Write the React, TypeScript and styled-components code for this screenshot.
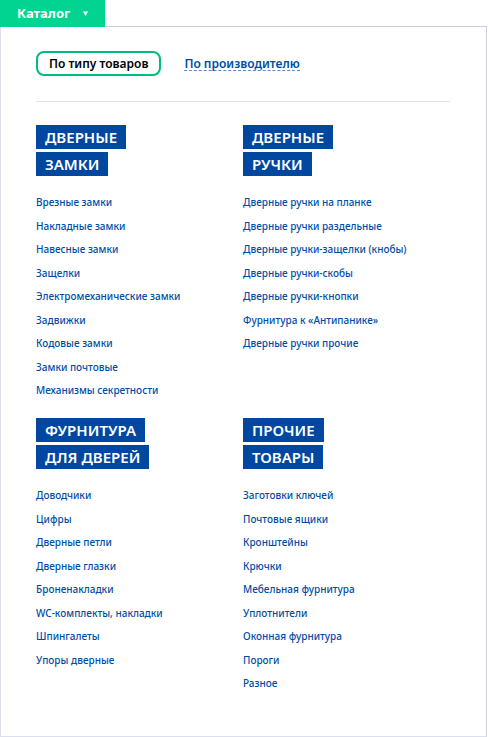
import React from "react";
import styled, { createGlobalStyle } from "styled-components";

const GlobalStyle = createGlobalStyle`
  * { box-sizing: border-box; }
  body {
    margin: 0;
    background: #fff;
    font-family: "Noto Sans", "Open Sans", sans-serif;
  }
`;

const Page = styled.div`
  display: flex;
  flex-direction: column;
  align-items: flex-start;
  padding-right: 1px;
`;

const CatalogButton = styled.button`
  display: flex;
  align-items: center;
  gap: 13px;
  height: 27px;
  margin-bottom: -1px;
  padding: 0 17px;
  border: 0;
  z-index: 1;
  background: #00d490;
  color: #fff;
  font: 700 13px/27px "Noto Sans", sans-serif;
  cursor: pointer;
`;

const Panel = styled.main`
  align-self: stretch;
  padding: 24px 36px 40px 35px;
  border: 1px solid #dcdfed;
  border-top-color: #c9cedd;
  border-right-color: #cdd1e2;
`;

const Tabs = styled.nav`
  display: flex;
  align-items: center;
  gap: 23px;
  padding-bottom: 25px;
  border-bottom: 1px solid #dfe5e7;
`;

const ActiveTab = styled.button`
  height: 25px;
  padding: 0 11px;
  border: 2px solid #00bd7b;
  border-radius: 8px;
  background: #fff;
  color: #000;
  font: 600 12px/21px "Noto Sans", sans-serif;
  cursor: pointer;
`;

const TabLink = styled.a`
  border-bottom: 1px dashed #5d8bc5;
  color: #004da5;
  font-size: 12px;
  font-weight: 600;
  line-height: 13px;
  text-decoration: none;
`;

const Groups = styled.div`
  display: grid;
  grid-template-columns: 1fr 1fr;
  row-gap: 15px;
  padding-top: 23px;
`;

const Heading = styled.h2`
  display: flex;
  flex-direction: column;
  align-items: flex-start;
  gap: 3px;
  margin: 0 0 15px;
`;

const HeadingLine = styled.span`
  padding: 0 9px;
  background: #0047a0;
  color: #fff;
  font-size: 15px;
  font-weight: 600;
  line-height: 24px;
`;

const List = styled.ul`
  display: grid;
  grid-auto-rows: 24px 23px;
  margin: 0;
  padding: 0;
  list-style: none;
`;

const Item = styled.li`
  font-size: 10px;
  line-height: 23px;
`;

const ItemLink = styled.a`
  color: #004da5;
  font-weight: 500;
  text-decoration: none;
  white-space: nowrap;
`;

const groups = [
  {
    title: ["ДВЕРНЫЕ", "ЗАМКИ"],
    items: ["Врезные замки", "Накладные замки", "Навесные замки", "Защелки", "Электромеханические замки", "Задвижки", "Кодовые замки", "Замки почтовые", "Механизмы секретности"],
  },
  {
    title: ["ДВЕРНЫЕ", "РУЧКИ"],
    items: ["Дверные ручки на планке", "Дверные ручки раздельные", "Дверные ручки-защелки (кнобы)", "Дверные ручки-скобы", "Дверные ручки-кнопки", "Фурнитура к «Антипанике»", "Дверные ручки прочие"],
  },
  {
    title: ["ФУРНИТУРА", "ДЛЯ ДВЕРЕЙ"],
    items: ["Доводчики", "Цифры", "Дверные петли", "Дверные глазки", "Броненакладки", "WC-комплекты, накладки", "Шпингалеты", "Упоры дверные"],
  },
  {
    title: ["ПРОЧИЕ", "ТОВАРЫ"],
    items: ["Заготовки ключей", "Почтовые ящики", "Кронштейны", "Крючки", "Мебельная фурнитура", "Уплотнители", "Оконная фурнитура", "Пороги", "Разное"],
  },
];

export default function App() {
  return (
    <Page>
      <GlobalStyle />
      <CatalogButton type="button" aria-expanded="true">
        Каталог
        <svg width="5" height="5" viewBox="0 0 5 5" aria-hidden="true">
          <path d="M0 0.5H5L2.5 5Z" fill="#fff" />
        </svg>
      </CatalogButton>
      <Panel>
        <Tabs>
          <ActiveTab type="button">По типу товаров</ActiveTab>
          <TabLink href="#manufacturer">По производителю</TabLink>
        </Tabs>
        <Groups>
          {groups.map((group) => (
            <section key={group.title.join(" ")}>
              <Heading>
                {group.title.map((line) => (
                  <HeadingLine key={line}>{line}</HeadingLine>
                ))}
              </Heading>
              <List>
                {group.items.map((item) => (
                  <Item key={item}>
                    <ItemLink href="#catalog">{item}</ItemLink>
                  </Item>
                ))}
              </List>
            </section>
          ))}
        </Groups>
      </Panel>
    </Page>
  );
}
